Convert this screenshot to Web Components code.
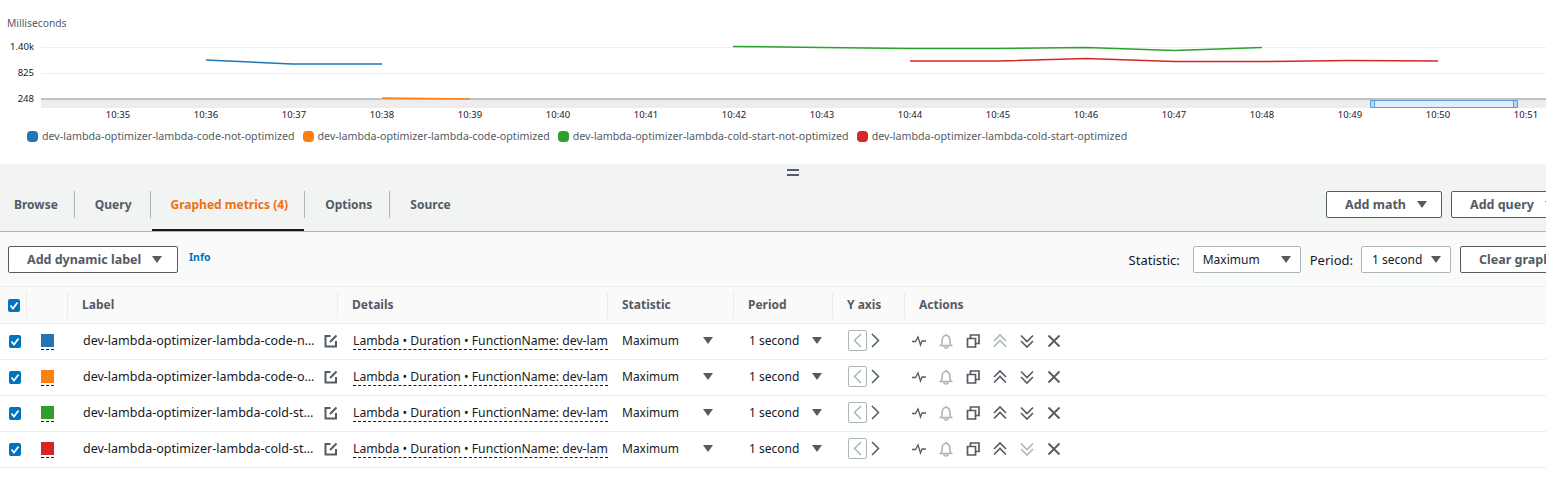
<!DOCTYPE html>
<html>
<head>
<meta charset="utf-8">
<style>
	html, body { margin: 0; background: #fff; overflow: hidden; }
	body { font-family: "Noto Sans", Arial, sans-serif; color: #16191f; }
</style>
</head>
<body>
<metric-chart></metric-chart>
<metric-tabs>
	<aws-button slot="actions" caret style="width:116px">Add math</aws-button>
	<aws-button slot="actions" caret style="width:120px">Add query</aws-button>
</metric-tabs>
<metric-toolbar></metric-toolbar>
<metric-table>
	<metric-row color="#1f77b4" label="dev-lambda-optimizer-lambda-code-n…" no-up></metric-row>
	<metric-row color="#ff7f0e" label="dev-lambda-optimizer-lambda-code-o…"></metric-row>
	<metric-row color="#2ca02c" label="dev-lambda-optimizer-lambda-cold-st…"></metric-row>
	<metric-row color="#d62728" label="dev-lambda-optimizer-lambda-cold-st…" no-down></metric-row>
</metric-table>

<script>
const CARET = `<svg width="10" height="7" viewBox="0 0 10 7"><path d="M0 0h10L5 7z" fill="#545b64"/></svg>`;

const ICONS = {
	pulse: `<polyline stroke-width="1.3" points="1,8.5 4.5,8.5 7,4 9.5,12 11,8 15,8"/>`,
	bell: `<path stroke="#aab7b8" d="M1.5 12.5h13M3 12.5C4 10.500 4.300 9 4.300 6.500 4.300 4 6 2.500 8 2.500s3.700 1.500 3.700 4c0 2.500.3 4 1.300 6M6 13a2 2 0 0 0 4 0M8 .8v1.700"/>`,
	copy: `<path stroke-width="1.700" d="M2.500 5.500h8v8.500h-8zM5.500 5V2h8.500v8.500h-3"/>`,
	up: `<path d="M2 8l6-6 6 6M2 13.500l6-6 6 6"/>`,
	down: `<path d="M2 2.500l6 6 6-6M2 8l6 6 6-6"/>`,
	close: `<path stroke-width="1.800" d="M2.500 2.500l11 11M13.500 2.500l-11 11"/>`
};

function icon(name, color) {
	return `<svg width="16" height="16" viewBox="0 0 16 16" fill="none" stroke="${color || '#545b64'}" stroke-width="1.6">${ICONS[name]}</svg>`;
}

class AwsButton extends HTMLElement {
	constructor() {
		super();
		const shadowRoot = this.attachShadow({ mode: 'open' });
		shadowRoot.innerHTML = `
			<style>
				:host {
					display: inline-flex;
					align-items: center;
					box-sizing: border-box;
					height: 27px;
					padding-left: 18px;
					background: #fff;
					border: 1px solid #545b64;
					border-radius: 2px;
					color: #545b64;
					font-size: 12.5px;
					font-weight: 700;
					flex-shrink: 0;
					white-space: nowrap;
				}
				svg { margin-left: 11px; }
			</style>
			<slot></slot>${this.hasAttribute('caret') ? CARET : ''}
		`;
	}
}
customElements.define('aws-button', AwsButton);

class MetricChart extends HTMLElement {
	constructor() {
		super();
		const shadowRoot = this.attachShadow({ mode: 'open' });
		const ticks = [];
		for (let i = 0; i < 17; i++) {
			ticks.push(`<text x="${118 + i * 88}" y="118" text-anchor="middle">10:${35 + i}</text>`);
		}
		const line = (color, pts) => `<polyline points="${pts}" fill="none" stroke="${color}" stroke-width="1.5"/>`;
		const legend = [
			['#1f77b4', 'dev-lambda-optimizer-lambda-code-not-optimized'],
			['#ff7f0e', 'dev-lambda-optimizer-lambda-code-optimized'],
			['#2ca02c', 'dev-lambda-optimizer-lambda-cold-start-not-optimized'],
			['#d62728', 'dev-lambda-optimizer-lambda-cold-start-optimized']
		].map(([c, t]) => `<span class="item"><i style="background:${c}"></i>${t}</span>`).join('');
		shadowRoot.innerHTML = `
			<style>
				:host { display: block; height: 164px; background: #fff; }
				svg { display: block; }
				text { font-size: 9.5px; fill: #16191f; }
				.title { font-size: 10.3px; fill: #545b64; }
				.legend {
					display: flex;
					gap: 8px;
					padding: 3px 0 0 27px;
					font-size: 10.66px;
					line-height: 16px;
					color: #545b64;
					white-space: nowrap;
				}
				.item { display: flex; align-items: center; gap: 4px; }
				i { width: 11px; height: 11px; border-radius: 4px; }
			</style>
			<svg width="1546" height="125">
				<text class="title" x="7" y="27">Milliseconds</text>
				<path d="M41 47.5H1546M41 73.5H1546" stroke="#eee"/>
				<rect x="41" y="99" width="1505" height="9" fill="#ededed"/>
				<rect x="41" y="98" width="1505" height="2" fill="#c2c2c2"/>
				<text x="34" y="50" text-anchor="end">1.40k</text>
				<text x="34" y="76" text-anchor="end">825</text>
				<text x="34" y="102" text-anchor="end">248</text>
				${line('#1f77b4', '206,60 292,64 382,64')}
				${line('#ff7f0e', '382,98 470,99')}
				${line('#2ca02c', '733,46.5 822,47.5 910,48.5 998,48.5 1086,47.5 1174,50.5 1262,47.5')}
				${line('#d62728', '910,61 998,61 1086,58.5 1174,61.5 1262,61.5 1350,60.5 1438,61')}
				<rect x="1370.5" y="100.5" width="147" height="7" fill="#e0eefb" stroke="#5b9bde"/>
				<rect x="1370.5" y="100.5" width="4" height="7" fill="#bcd7f2" stroke="#5b9bde"/>
				<rect x="1513.5" y="100.5" width="4" height="7" fill="#bcd7f2" stroke="#5b9bde"/>
				${ticks.join('')}
			</svg>
			<div class="legend">${legend}</div>
		`;
	}
}
customElements.define('metric-chart', MetricChart);

class MetricTabs extends HTMLElement {
	constructor() {
		super();
		const shadowRoot = this.attachShadow({ mode: 'open' });
		const tabs = ['Browse', 'Query', 'Graphed metrics (4)', 'Options', 'Source'];
		shadowRoot.innerHTML = `
			<style>
				:host {
					display: block;
					height: 68px;
					box-sizing: border-box;
					background: #f2f3f3;
					border-bottom: 1px solid #aab7b8;
					overflow: hidden;
				}
				.handle {
					height: 26px;
					display: flex;
					justify-content: center;
					padding-top: 5px;
					box-sizing: border-box;
				}
				.handle span { width: 12px; height: 7px; margin-left: 40px; border-top: 2px solid #545b64; border-bottom: 2px solid #545b64; box-sizing: border-box; }
				.bar { display: flex; width: 1571px; height: 41px; padding-top: 1px; box-sizing: border-box; }
				.tabs { display: flex; }
				.tab {
					position: relative;
					height: 27px;
					display: flex;
					align-items: center;
					padding: 0 18px 0 20px;
					font-size: 12px;
					font-weight: 700;
					color: #545b64;
					white-space: nowrap;
					border-right: 1px solid #aab7b8;
				}
				.tab:first-child { padding: 0 16px 0 14px; }
				.tab:last-child { border-right: 0; }
				.tab.active { color: #ec7211; padding-right: 16px; }
				.tab.active + .tab { padding-right: 17px; }
				.tab.active::after {
					content: "";
					position: absolute;
					left: 1px;
					right: 0;
					top: 38px;
					height: 2px;
					background: #16191f;
				}
				.actions { margin-left: auto; display: flex; gap: 9px; }
			</style>
			<div class="handle"><span></span></div>
			<div class="bar">
				<div class="tabs">${tabs.map((t, i) => `<div class="tab${i === 2 ? ' active' : ''}">${t}</div>`).join('')}</div>
				<div class="actions"><slot name="actions"></slot></div>
			</div>
		`;
	}
}
customElements.define('metric-tabs', MetricTabs);

class MetricSelect extends HTMLElement {
	constructor() {
		super();
		const shadowRoot = this.attachShadow({ mode: 'open' });
		shadowRoot.innerHTML = `
			<style>
				:host {
					display: inline-flex;
					align-items: center;
					justify-content: space-between;
					box-sizing: border-box;
					height: 27px;
					padding: 0 9px;
					background: #fff;
					border: 1px solid #aab7b8;
					border-radius: 2px;
					font-size: 12px;
					color: #16191f;
					white-space: nowrap;
					flex-shrink: 0;
				}
			</style>
			<slot></slot>${CARET}
		`;
	}
}
customElements.define('metric-select', MetricSelect);

class MetricToolbar extends HTMLElement {
	constructor() {
		super();
		const shadowRoot = this.attachShadow({ mode: 'open' });
		shadowRoot.innerHTML = `
			<style>
				:host {
					display: block;
					height: 54px;
					box-sizing: border-box;
					background: #fafafa;
					overflow: hidden;
				}
				.bar {
					display: flex;
					align-items: center;
					width: 1580px;
					height: 54px;
					padding: 1px 0 0 8px;
					box-sizing: border-box;
					font-size: 13px;
				}
				a {
					margin: -6px 0 0 11px;
					font-size: 10.5px;
					font-weight: 700;
					color: #0073bb;
				}
				.right { margin-left: auto; display: flex; align-items: center; }
				.lbl { margin-right: 13px; }
				.lbl.p { margin: 0 8px 0 9px; }
				.right aws-button { margin-left: 9px; }
			</style>
			<div class="bar">
				<aws-button caret style="width:170px">Add dynamic label</aws-button>
				<a>Info</a>
				<div class="right">
					<span class="lbl">Statistic:</span>
					<metric-select style="width:108px">Maximum</metric-select>
					<span class="lbl p">Period:</span>
					<metric-select style="width:90px;padding-left:10px">1 second</metric-select>
					<aws-button style="width:120px">Clear graph</aws-button>
				</div>
			</div>
		`;
	}
}
customElements.define('metric-toolbar', MetricToolbar);

const COLS = '270px 270px 126px 99px 72px 1fr';

class MetricCheck extends HTMLElement {
	constructor() {
		super();
		const shadowRoot = this.attachShadow({ mode: 'open' });
		shadowRoot.innerHTML = `
			<style>
				:host {
					display: block;
					width: 12px;
					height: 13px;
					background: #0073bb;
					border-radius: 2px;
				}
				svg { display: block; }
			</style>
			<svg width="12" height="13" viewBox="0 0 12 13"><path d="M2.500 6.500l2.500 3 4.500-6" fill="none" stroke="#fff" stroke-width="1.800"/></svg>
		`;
	}
}
customElements.define('metric-check', MetricCheck);

class MetricTable extends HTMLElement {
	constructor() {
		super();
		const shadowRoot = this.attachShadow({ mode: 'open' });
		const heads = ['', '', 'Label', 'Details', 'Statistic', 'Period', 'Y axis', 'Actions'];
		shadowRoot.innerHTML = `
			<style>
				:host { display: block; }
				.head {
					display: grid;
					grid-template-columns: 26px 41px ${COLS};
					height: 38px;
					box-sizing: border-box;
					align-items: center;
					background: #fafafa;
					border-top: 1px solid #eaeded;
					border-bottom: 1px solid #eaeded;
					font-size: 12px;
					font-weight: 700;
					color: #545b64;
				}
				.head > div {
					height: 27px;
					display: flex;
					align-items: center;
					box-sizing: border-box;
					padding: 0 0 2px 14px;
					border-left: 1px solid #eaeded;
				}
				.head > div:first-child { border-left: 0; padding: 0 0 0 8px; }
			</style>
			<div class="head">
				${heads.map((h, i) => `<div>${i === 0 ? '<metric-check></metric-check>' : h}</div>`).join('')}
			</div>
			<slot></slot>
		`;
	}
}
customElements.define('metric-table', MetricTable);

class MetricRow extends HTMLElement {
	constructor() {
		super();
		const shadowRoot = this.attachShadow({ mode: 'open' });
		const label = this.getAttribute('label');
		const color = this.getAttribute('color');
		const muted = '#aab7b8';
		shadowRoot.innerHTML = `
			<style>
				:host {
					display: grid;
					grid-template-columns: 27px 41px ${COLS};
					align-items: center;
					height: 36px;
					box-sizing: border-box;
					padding-bottom: 2px;
					border-bottom: 1px solid #eaeded;
					background: #fff;
					font-size: 12px;
					color: #16191f;
				}
				.check { padding: 2px 0 0 9px; }
				.swatch { margin-left: 14px; width: 13px; height: 13px; background: ${color}; position: relative; }
				.swatch::after { content: ""; position: absolute; left: 0; right: 0; top: 15px; border-top: 1px dashed #16191f; }
				.label { display: flex; align-items: center; padding-left: 15px; font-size: 12.5px; }
				.label span { width: 234px; white-space: nowrap; overflow: hidden; }
				.label svg { margin-left: 7px; flex-shrink: 0; }
				.details {
					margin: 1px 0 0 15px;
					overflow: hidden;
					white-space: nowrap;
					font-size: 12.2px;
					line-height: 17px;
					border-bottom: 1px dashed #16191f;
				}
				.stat { display: flex; align-items: center; padding-left: 14px; }
				.stat.b { padding-left: 15px; }
				.stat.a svg { margin-left: 24px; }
				.stat.b svg { margin-left: 13px; }
				.yaxis { display: flex; align-items: center; padding-left: 15px; gap: 4px; }
				.left { width: 17px; height: 19px; display: flex; align-items: center; justify-content: center; border: 1px solid ${muted}; border-radius: 2px; }
				.actions { display: flex; gap: 11px; padding-left: 6px; }
				.actions svg { display: block; }
			</style>
			<div class="check"><metric-check></metric-check></div>
			<div class="swatch"></div>
			<div class="label">
				<span>${label}</span>
				<svg width="14" height="14" viewBox="0 0 14 14" fill="none" stroke="#545b64" stroke-width="2"><path d="M6.500 2H1.500v10.500H12V7M12.500 1.500L6 8"/></svg>
			</div>
			<div class="details">Lambda • Duration • FunctionName: dev-lam</div>
			<div class="stat a">Maximum${CARET}</div>
			<div class="stat b">1 second${CARET}</div>
			<div class="yaxis">
				<div class="left"><svg width="9" height="15" viewBox="0 0 9 15" fill="none" stroke="${muted}" stroke-width="1.500"><path d="M8 1L1.500 7.500 8 14"/></svg></div>
				<svg width="9" height="15" viewBox="0 0 9 15" fill="none" stroke="#545b64" stroke-width="1.500"><path d="M1 1l6.500 6.500L1 14"/></svg>
			</div>
			<div class="actions">
				${icon('pulse')}${icon('bell', muted)}${icon('copy')}
				${icon('up', this.hasAttribute('no-up') ? muted : '')}
				${icon('down', this.hasAttribute('no-down') ? muted : '')}
				${icon('close')}
			</div>
		`;
	}
}
customElements.define('metric-row', MetricRow);
</script>
</body>
</html>
